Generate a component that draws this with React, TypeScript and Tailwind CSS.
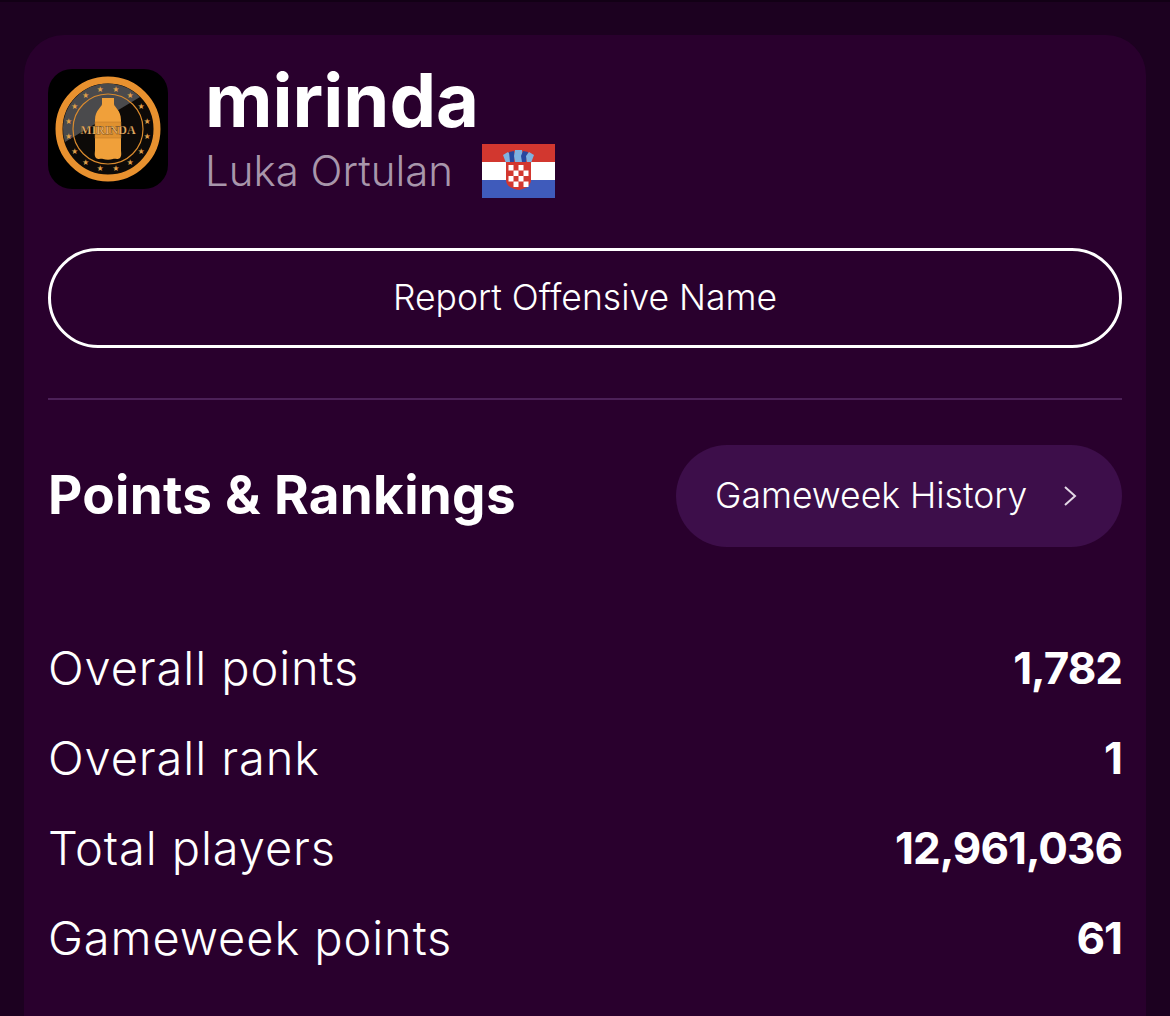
const rows = [
  { label: "Overall points", value: "1,782" },
  { label: "Overall rank", value: "1" },
  { label: "Total players", value: "12,961,036" },
  { label: "Gameweek points", value: "61" },
];

const stars = Array.from({ length: 16 }, (_, i) => {
  const a = ((i + 0.5) / 16) * Math.PI * 2;
  return { x: 60 + Math.cos(a) * 40, y: 60 + Math.sin(a) * 40 };
});

function Logo() {
  return (
    <div className="w-[120px] h-[120px] rounded-[24px] bg-black shrink-0 overflow-hidden">
      <svg viewBox="0 0 120 120" className="w-full h-full">
        <circle cx="60" cy="60" r="49" fill="#0d0a08" stroke="#e8912f" strokeWidth="7" />
        <path d="M17 73 A45 45 0 0 1 92 28 Z" fill="#4a4a4c" />
        <circle cx="60" cy="60" r="35" fill="none" stroke="#d98a2e" strokeWidth="1.2" />
        {stars.map((s, i) => (
          <text key={i} x={s.x} y={s.y + 2.5} textAnchor="middle" fill="#e0a04a" fontSize="7">
            ★
          </text>
        ))}
        <path
          d="M54 29h12v6c0 3 7 6 7 16v30c0 3 1 5-1 8-3 2-5 0-7 1-3 1-7 1-10 0-2-1-4 1-7-1-2-3-1-5-1-8V51c0-10 7-13 7-16z"
          fill="#f0a03a"
        />
        <rect x="47" y="53" width="26" height="16" fill="#e0912f" stroke="#b9742a" strokeWidth="0.5" />
        <text x="60" y="65" textAnchor="middle" fill="#ecb268" stroke="#1a0f05" strokeWidth="0.25" fontSize="12" fontWeight="700" fontFamily="'Liberation Serif', serif">
          MIRINDA
        </text>
      </svg>
    </div>
  );
}

function Flag() {
  return (
    <svg viewBox="0 0 73 54" className="w-[73px] h-[54px] shrink-0">
      <rect width="73" height="18" fill="#d2372f" />
      <rect y="18" width="73" height="18" fill="#ffffff" />
      <rect y="36" width="73" height="18" fill="#3f5bbb" />
      <path d="M21 11l5-3 3 4-1 7h-4z" fill="#7fb2e0" />
      <path d="M27 8l5-1 1 5-1 6h-4z" fill="#27479f" />
      <path d="M33 6h7l1 6-1 6h-7l-1-6z" fill="#7fb2e0" />
      <path d="M41 7l5 1-1 5-1 5h-4l-1-6z" fill="#27479f" />
      <path d="M47 8l5 3-3 8h-4l-1-7z" fill="#7fb2e0" />
      <path d="M24 18h25v18c0 6-6 9-12.500 10C30 45 24 42 24 36z" fill="#d2372f" />
      {[0, 1, 2, 3].map((r) =>
        [0, 1, 2, 3].map((c) =>
          (r + c) % 2 === 0 ? (
            <rect key={`${r}-${c}`} x={26.5 + c * 5} y={21 + r * 5.5} width="5" height="5.500" fill="#ffffff" />
          ) : null
        )
      )}
    </svg>
  );
}

export default function App() {
  return (
    <div className="w-[1170px] h-[1016px] overflow-hidden bg-[#1c0120] border-t-2 border-[#120015] pt-[33px] px-6 font-['Inter',sans-serif] text-white">
      <div className="h-[1100px] rounded-[40px] bg-[#29002d] pt-[34px] pl-6 pr-6">
        <div className="flex items-start gap-[37px]">
          <Logo />
          <div className="flex flex-col">
            <h1 className="text-[74px] leading-[62px] font-bold">mirinda</h1>
            <div className="flex items-center gap-[29px] mt-[13px]">
              <span className="text-[42px] leading-[54px] font-light text-[#a896ab]">Luka Ortulan</span>
              <Flag />
            </div>
          </div>
        </div>

        <button className="mt-[50px] w-full h-[100px] rounded-full border-[3px] border-white text-[35.5px] font-light">
          Report Offensive Name
        </button>

        <div className="mt-[50px] h-[2px] bg-[#4c2058]" />

        <div className="mt-[45px] flex items-center justify-between">
          <h2 className="text-[53px] font-bold leading-none tracking-[0.3px] -mt-[2px]">Points &amp; Rankings</h2>
          <button className="w-[446px] h-[102px] rounded-full bg-[#3d0e4a] flex items-center justify-between pl-[39px] pr-[44px]">
            <span className="text-[35.5px] font-light">Gameweek History</span>
            <svg viewBox="0 0 16 24" className="w-4 h-6 text-[#e3d8e6]" fill="none" stroke="currentColor" strokeWidth="2">
              <path d="M3 3l10 9-10 9" />
            </svg>
          </button>
        </div>

        <div className="mt-[76px] flex flex-col">
          {rows.map((row) => (
            <div key={row.label} className="h-[90px] flex items-center justify-between">
              <span className="text-[47px] font-light tracking-[0.9px]">{row.label}</span>
              <span className="text-[44px] font-bold tracking-[-1px]">{row.value}</span>
            </div>
          ))}
        </div>
      </div>
    </div>
  );
}
